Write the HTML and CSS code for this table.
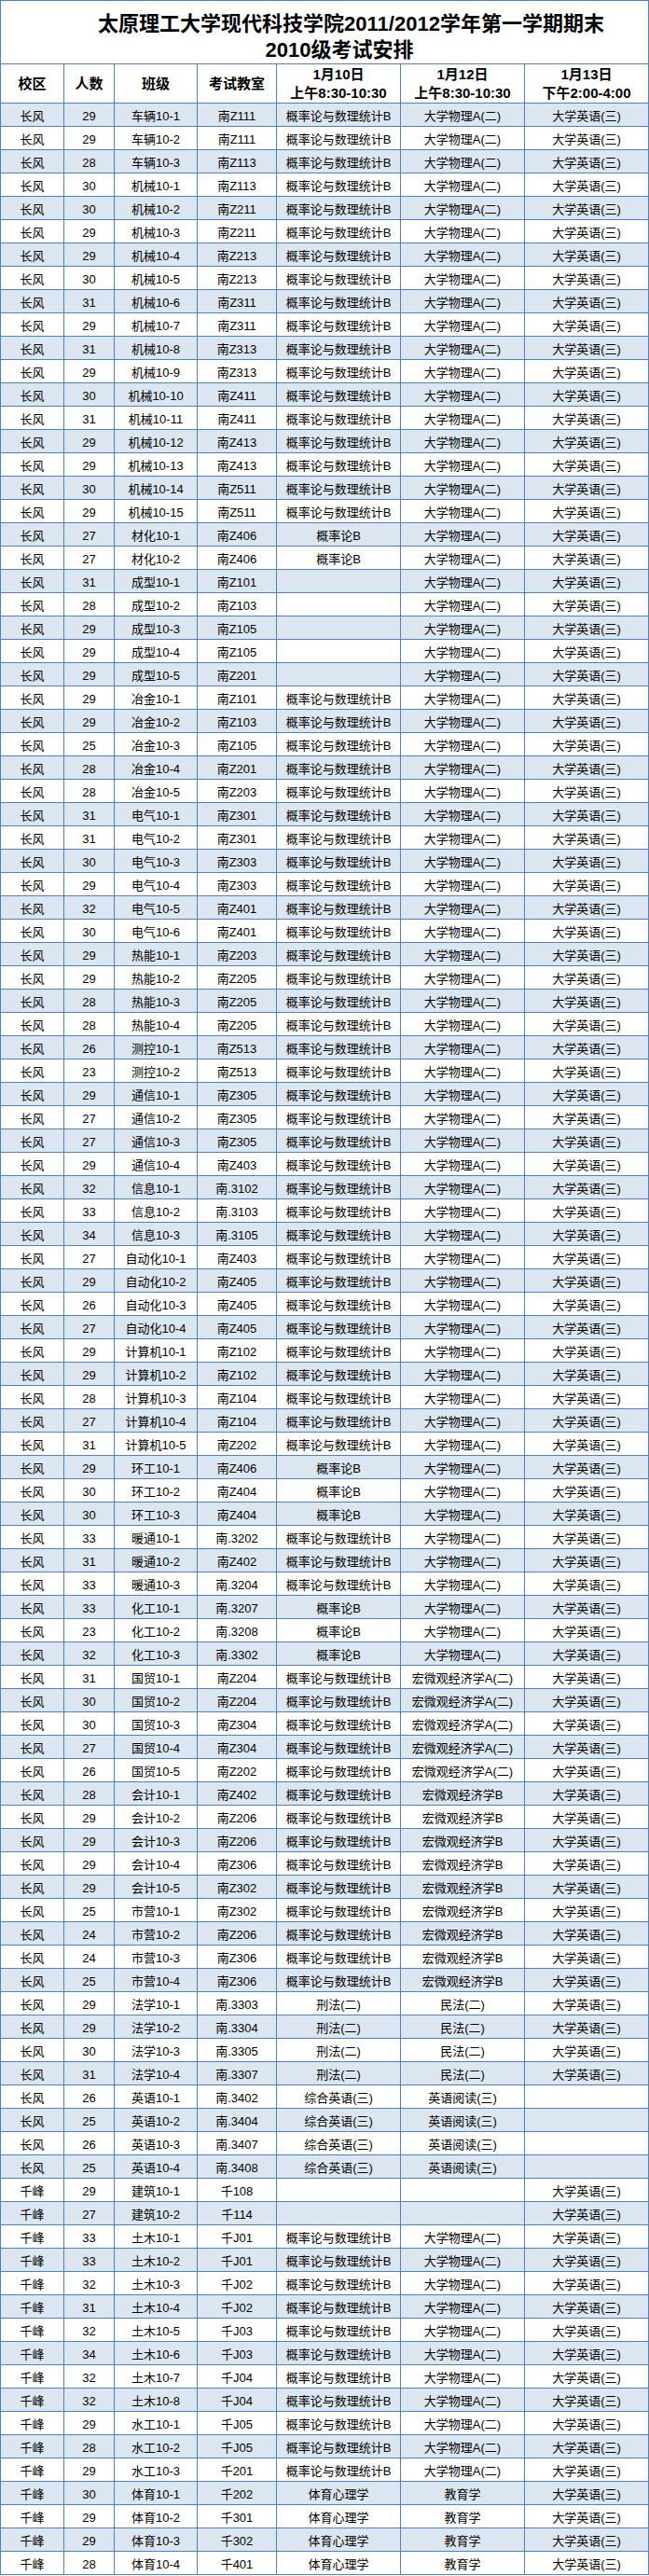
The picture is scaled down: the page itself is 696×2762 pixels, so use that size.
FILE: index.html
```html
<!DOCTYPE html>
<html lang="zh-CN">
<head>
<meta charset="utf-8">
<title>2010级考试安排</title>
<link rel="stylesheet" href="styles.css">
</head>
<body>
<div class="title">
  <div class="t1">太原理工大学现代科技学院2011/2012学年第一学期期末</div>
  <div class="t2">2010级考试安排</div>
</div>
<table class="sheet">
<thead>
<tr>
  <th class="c1">校区</th><th class="c2">人数</th><th class="c3">班级</th><th class="c4">考试教室</th>
  <th class="c5">1月10日<br>上午8:30-10:30</th><th class="c6">1月12日<br>上午8:30-10:30</th><th class="c7">1月13日<br>下午2:00-4:00</th>
</tr>
</thead>
<tbody>
<tr class="s"><td>长风</td><td>29</td><td>车辆10-1</td><td>南Z111</td><td>概率论与数理统计B</td><td>大学物理A(二)</td><td>大学英语(三)</td></tr>
<tr><td>长风</td><td>29</td><td>车辆10-2</td><td>南Z111</td><td>概率论与数理统计B</td><td>大学物理A(二)</td><td>大学英语(三)</td></tr>
<tr class="s"><td>长风</td><td>28</td><td>车辆10-3</td><td>南Z113</td><td>概率论与数理统计B</td><td>大学物理A(二)</td><td>大学英语(三)</td></tr>
<tr><td>长风</td><td>30</td><td>机械10-1</td><td>南Z113</td><td>概率论与数理统计B</td><td>大学物理A(二)</td><td>大学英语(三)</td></tr>
<tr class="s"><td>长风</td><td>30</td><td>机械10-2</td><td>南Z211</td><td>概率论与数理统计B</td><td>大学物理A(二)</td><td>大学英语(三)</td></tr>
<tr><td>长风</td><td>29</td><td>机械10-3</td><td>南Z211</td><td>概率论与数理统计B</td><td>大学物理A(二)</td><td>大学英语(三)</td></tr>
<tr class="s"><td>长风</td><td>29</td><td>机械10-4</td><td>南Z213</td><td>概率论与数理统计B</td><td>大学物理A(二)</td><td>大学英语(三)</td></tr>
<tr><td>长风</td><td>30</td><td>机械10-5</td><td>南Z213</td><td>概率论与数理统计B</td><td>大学物理A(二)</td><td>大学英语(三)</td></tr>
<tr class="s"><td>长风</td><td>31</td><td>机械10-6</td><td>南Z311</td><td>概率论与数理统计B</td><td>大学物理A(二)</td><td>大学英语(三)</td></tr>
<tr><td>长风</td><td>29</td><td>机械10-7</td><td>南Z311</td><td>概率论与数理统计B</td><td>大学物理A(二)</td><td>大学英语(三)</td></tr>
<tr class="s"><td>长风</td><td>31</td><td>机械10-8</td><td>南Z313</td><td>概率论与数理统计B</td><td>大学物理A(二)</td><td>大学英语(三)</td></tr>
<tr><td>长风</td><td>29</td><td>机械10-9</td><td>南Z313</td><td>概率论与数理统计B</td><td>大学物理A(二)</td><td>大学英语(三)</td></tr>
<tr class="s"><td>长风</td><td>30</td><td>机械10-10</td><td>南Z411</td><td>概率论与数理统计B</td><td>大学物理A(二)</td><td>大学英语(三)</td></tr>
<tr><td>长风</td><td>31</td><td>机械10-11</td><td>南Z411</td><td>概率论与数理统计B</td><td>大学物理A(二)</td><td>大学英语(三)</td></tr>
<tr class="s"><td>长风</td><td>29</td><td>机械10-12</td><td>南Z413</td><td>概率论与数理统计B</td><td>大学物理A(二)</td><td>大学英语(三)</td></tr>
<tr><td>长风</td><td>29</td><td>机械10-13</td><td>南Z413</td><td>概率论与数理统计B</td><td>大学物理A(二)</td><td>大学英语(三)</td></tr>
<tr class="s"><td>长风</td><td>30</td><td>机械10-14</td><td>南Z511</td><td>概率论与数理统计B</td><td>大学物理A(二)</td><td>大学英语(三)</td></tr>
<tr><td>长风</td><td>29</td><td>机械10-15</td><td>南Z511</td><td>概率论与数理统计B</td><td>大学物理A(二)</td><td>大学英语(三)</td></tr>
<tr class="s"><td>长风</td><td>27</td><td>材化10-1</td><td>南Z406</td><td>概率论B</td><td>大学物理A(二)</td><td>大学英语(三)</td></tr>
<tr><td>长风</td><td>27</td><td>材化10-2</td><td>南Z406</td><td>概率论B</td><td>大学物理A(二)</td><td>大学英语(三)</td></tr>
<tr class="s"><td>长风</td><td>31</td><td>成型10-1</td><td>南Z101</td><td></td><td>大学物理A(二)</td><td>大学英语(三)</td></tr>
<tr><td>长风</td><td>28</td><td>成型10-2</td><td>南Z103</td><td></td><td>大学物理A(二)</td><td>大学英语(三)</td></tr>
<tr class="s"><td>长风</td><td>29</td><td>成型10-3</td><td>南Z105</td><td></td><td>大学物理A(二)</td><td>大学英语(三)</td></tr>
<tr><td>长风</td><td>29</td><td>成型10-4</td><td>南Z105</td><td></td><td>大学物理A(二)</td><td>大学英语(三)</td></tr>
<tr class="s"><td>长风</td><td>29</td><td>成型10-5</td><td>南Z201</td><td></td><td>大学物理A(二)</td><td>大学英语(三)</td></tr>
<tr><td>长风</td><td>29</td><td>冶金10-1</td><td>南Z101</td><td>概率论与数理统计B</td><td>大学物理A(二)</td><td>大学英语(三)</td></tr>
<tr class="s"><td>长风</td><td>29</td><td>冶金10-2</td><td>南Z103</td><td>概率论与数理统计B</td><td>大学物理A(二)</td><td>大学英语(三)</td></tr>
<tr><td>长风</td><td>25</td><td>冶金10-3</td><td>南Z105</td><td>概率论与数理统计B</td><td>大学物理A(二)</td><td>大学英语(三)</td></tr>
<tr class="s"><td>长风</td><td>28</td><td>冶金10-4</td><td>南Z201</td><td>概率论与数理统计B</td><td>大学物理A(二)</td><td>大学英语(三)</td></tr>
<tr><td>长风</td><td>28</td><td>冶金10-5</td><td>南Z203</td><td>概率论与数理统计B</td><td>大学物理A(二)</td><td>大学英语(三)</td></tr>
<tr class="s"><td>长风</td><td>31</td><td>电气10-1</td><td>南Z301</td><td>概率论与数理统计B</td><td>大学物理A(二)</td><td>大学英语(三)</td></tr>
<tr><td>长风</td><td>31</td><td>电气10-2</td><td>南Z301</td><td>概率论与数理统计B</td><td>大学物理A(二)</td><td>大学英语(三)</td></tr>
<tr class="s"><td>长风</td><td>30</td><td>电气10-3</td><td>南Z303</td><td>概率论与数理统计B</td><td>大学物理A(二)</td><td>大学英语(三)</td></tr>
<tr><td>长风</td><td>29</td><td>电气10-4</td><td>南Z303</td><td>概率论与数理统计B</td><td>大学物理A(二)</td><td>大学英语(三)</td></tr>
<tr class="s"><td>长风</td><td>32</td><td>电气10-5</td><td>南Z401</td><td>概率论与数理统计B</td><td>大学物理A(二)</td><td>大学英语(三)</td></tr>
<tr><td>长风</td><td>30</td><td>电气10-6</td><td>南Z401</td><td>概率论与数理统计B</td><td>大学物理A(二)</td><td>大学英语(三)</td></tr>
<tr class="s"><td>长风</td><td>29</td><td>热能10-1</td><td>南Z203</td><td>概率论与数理统计B</td><td>大学物理A(二)</td><td>大学英语(三)</td></tr>
<tr><td>长风</td><td>29</td><td>热能10-2</td><td>南Z205</td><td>概率论与数理统计B</td><td>大学物理A(二)</td><td>大学英语(三)</td></tr>
<tr class="s"><td>长风</td><td>28</td><td>热能10-3</td><td>南Z205</td><td>概率论与数理统计B</td><td>大学物理A(二)</td><td>大学英语(三)</td></tr>
<tr><td>长风</td><td>28</td><td>热能10-4</td><td>南Z205</td><td>概率论与数理统计B</td><td>大学物理A(二)</td><td>大学英语(三)</td></tr>
<tr class="s"><td>长风</td><td>26</td><td>测控10-1</td><td>南Z513</td><td>概率论与数理统计B</td><td>大学物理A(二)</td><td>大学英语(三)</td></tr>
<tr><td>长风</td><td>23</td><td>测控10-2</td><td>南Z513</td><td>概率论与数理统计B</td><td>大学物理A(二)</td><td>大学英语(三)</td></tr>
<tr class="s"><td>长风</td><td>29</td><td>通信10-1</td><td>南Z305</td><td>概率论与数理统计B</td><td>大学物理A(二)</td><td>大学英语(三)</td></tr>
<tr><td>长风</td><td>27</td><td>通信10-2</td><td>南Z305</td><td>概率论与数理统计B</td><td>大学物理A(二)</td><td>大学英语(三)</td></tr>
<tr class="s"><td>长风</td><td>27</td><td>通信10-3</td><td>南Z305</td><td>概率论与数理统计B</td><td>大学物理A(二)</td><td>大学英语(三)</td></tr>
<tr><td>长风</td><td>29</td><td>通信10-4</td><td>南Z403</td><td>概率论与数理统计B</td><td>大学物理A(二)</td><td>大学英语(三)</td></tr>
<tr class="s"><td>长风</td><td>32</td><td>信息10-1</td><td>南.3102</td><td>概率论与数理统计B</td><td>大学物理A(二)</td><td>大学英语(三)</td></tr>
<tr><td>长风</td><td>33</td><td>信息10-2</td><td>南.3103</td><td>概率论与数理统计B</td><td>大学物理A(二)</td><td>大学英语(三)</td></tr>
<tr class="s"><td>长风</td><td>34</td><td>信息10-3</td><td>南.3105</td><td>概率论与数理统计B</td><td>大学物理A(二)</td><td>大学英语(三)</td></tr>
<tr><td>长风</td><td>27</td><td>自动化10-1</td><td>南Z403</td><td>概率论与数理统计B</td><td>大学物理A(二)</td><td>大学英语(三)</td></tr>
<tr class="s"><td>长风</td><td>29</td><td>自动化10-2</td><td>南Z405</td><td>概率论与数理统计B</td><td>大学物理A(二)</td><td>大学英语(三)</td></tr>
<tr><td>长风</td><td>26</td><td>自动化10-3</td><td>南Z405</td><td>概率论与数理统计B</td><td>大学物理A(二)</td><td>大学英语(三)</td></tr>
<tr class="s"><td>长风</td><td>27</td><td>自动化10-4</td><td>南Z405</td><td>概率论与数理统计B</td><td>大学物理A(二)</td><td>大学英语(三)</td></tr>
<tr><td>长风</td><td>29</td><td>计算机10-1</td><td>南Z102</td><td>概率论与数理统计B</td><td>大学物理A(二)</td><td>大学英语(三)</td></tr>
<tr class="s"><td>长风</td><td>29</td><td>计算机10-2</td><td>南Z102</td><td>概率论与数理统计B</td><td>大学物理A(二)</td><td>大学英语(三)</td></tr>
<tr><td>长风</td><td>28</td><td>计算机10-3</td><td>南Z104</td><td>概率论与数理统计B</td><td>大学物理A(二)</td><td>大学英语(三)</td></tr>
<tr class="s"><td>长风</td><td>27</td><td>计算机10-4</td><td>南Z104</td><td>概率论与数理统计B</td><td>大学物理A(二)</td><td>大学英语(三)</td></tr>
<tr><td>长风</td><td>31</td><td>计算机10-5</td><td>南Z202</td><td>概率论与数理统计B</td><td>大学物理A(二)</td><td>大学英语(三)</td></tr>
<tr class="s"><td>长风</td><td>29</td><td>环工10-1</td><td>南Z406</td><td>概率论B</td><td>大学物理A(二)</td><td>大学英语(三)</td></tr>
<tr><td>长风</td><td>30</td><td>环工10-2</td><td>南Z404</td><td>概率论B</td><td>大学物理A(二)</td><td>大学英语(三)</td></tr>
<tr class="s"><td>长风</td><td>30</td><td>环工10-3</td><td>南Z404</td><td>概率论B</td><td>大学物理A(二)</td><td>大学英语(三)</td></tr>
<tr><td>长风</td><td>33</td><td>暖通10-1</td><td>南.3202</td><td>概率论与数理统计B</td><td>大学物理A(二)</td><td>大学英语(三)</td></tr>
<tr class="s"><td>长风</td><td>31</td><td>暖通10-2</td><td>南Z402</td><td>概率论与数理统计B</td><td>大学物理A(二)</td><td>大学英语(三)</td></tr>
<tr><td>长风</td><td>33</td><td>暖通10-3</td><td>南.3204</td><td>概率论与数理统计B</td><td>大学物理A(二)</td><td>大学英语(三)</td></tr>
<tr class="s"><td>长风</td><td>33</td><td>化工10-1</td><td>南.3207</td><td>概率论B</td><td>大学物理A(二)</td><td>大学英语(三)</td></tr>
<tr><td>长风</td><td>23</td><td>化工10-2</td><td>南.3208</td><td>概率论B</td><td>大学物理A(二)</td><td>大学英语(三)</td></tr>
<tr class="s"><td>长风</td><td>32</td><td>化工10-3</td><td>南.3302</td><td>概率论B</td><td>大学物理A(二)</td><td>大学英语(三)</td></tr>
<tr><td>长风</td><td>31</td><td>国贸10-1</td><td>南Z204</td><td>概率论与数理统计B</td><td>宏微观经济学A(二)</td><td>大学英语(三)</td></tr>
<tr class="s"><td>长风</td><td>30</td><td>国贸10-2</td><td>南Z204</td><td>概率论与数理统计B</td><td>宏微观经济学A(二)</td><td>大学英语(三)</td></tr>
<tr><td>长风</td><td>30</td><td>国贸10-3</td><td>南Z304</td><td>概率论与数理统计B</td><td>宏微观经济学A(二)</td><td>大学英语(三)</td></tr>
<tr class="s"><td>长风</td><td>27</td><td>国贸10-4</td><td>南Z304</td><td>概率论与数理统计B</td><td>宏微观经济学A(二)</td><td>大学英语(三)</td></tr>
<tr><td>长风</td><td>26</td><td>国贸10-5</td><td>南Z202</td><td>概率论与数理统计B</td><td>宏微观经济学A(二)</td><td>大学英语(三)</td></tr>
<tr class="s"><td>长风</td><td>28</td><td>会计10-1</td><td>南Z402</td><td>概率论与数理统计B</td><td>宏微观经济学B</td><td>大学英语(三)</td></tr>
<tr><td>长风</td><td>29</td><td>会计10-2</td><td>南Z206</td><td>概率论与数理统计B</td><td>宏微观经济学B</td><td>大学英语(三)</td></tr>
<tr class="s"><td>长风</td><td>29</td><td>会计10-3</td><td>南Z206</td><td>概率论与数理统计B</td><td>宏微观经济学B</td><td>大学英语(三)</td></tr>
<tr><td>长风</td><td>29</td><td>会计10-4</td><td>南Z306</td><td>概率论与数理统计B</td><td>宏微观经济学B</td><td>大学英语(三)</td></tr>
<tr class="s"><td>长风</td><td>29</td><td>会计10-5</td><td>南Z302</td><td>概率论与数理统计B</td><td>宏微观经济学B</td><td>大学英语(三)</td></tr>
<tr><td>长风</td><td>25</td><td>市营10-1</td><td>南Z302</td><td>概率论与数理统计B</td><td>宏微观经济学B</td><td>大学英语(三)</td></tr>
<tr class="s"><td>长风</td><td>24</td><td>市营10-2</td><td>南Z206</td><td>概率论与数理统计B</td><td>宏微观经济学B</td><td>大学英语(三)</td></tr>
<tr><td>长风</td><td>24</td><td>市营10-3</td><td>南Z306</td><td>概率论与数理统计B</td><td>宏微观经济学B</td><td>大学英语(三)</td></tr>
<tr class="s"><td>长风</td><td>25</td><td>市营10-4</td><td>南Z306</td><td>概率论与数理统计B</td><td>宏微观经济学B</td><td>大学英语(三)</td></tr>
<tr><td>长风</td><td>29</td><td>法学10-1</td><td>南.3303</td><td>刑法(二)</td><td>民法(二)</td><td>大学英语(三)</td></tr>
<tr class="s"><td>长风</td><td>29</td><td>法学10-2</td><td>南.3304</td><td>刑法(二)</td><td>民法(二)</td><td>大学英语(三)</td></tr>
<tr><td>长风</td><td>30</td><td>法学10-3</td><td>南.3305</td><td>刑法(二)</td><td>民法(二)</td><td>大学英语(三)</td></tr>
<tr class="s"><td>长风</td><td>31</td><td>法学10-4</td><td>南.3307</td><td>刑法(二)</td><td>民法(二)</td><td>大学英语(三)</td></tr>
<tr><td>长风</td><td>26</td><td>英语10-1</td><td>南.3402</td><td>综合英语(三)</td><td>英语阅读(三)</td><td></td></tr>
<tr class="s"><td>长风</td><td>25</td><td>英语10-2</td><td>南.3404</td><td>综合英语(三)</td><td>英语阅读(三)</td><td></td></tr>
<tr><td>长风</td><td>26</td><td>英语10-3</td><td>南.3407</td><td>综合英语(三)</td><td>英语阅读(三)</td><td></td></tr>
<tr class="s"><td>长风</td><td>25</td><td>英语10-4</td><td>南.3408</td><td>综合英语(三)</td><td>英语阅读(三)</td><td></td></tr>
<tr><td>千峰</td><td>29</td><td>建筑10-1</td><td>千108</td><td></td><td></td><td>大学英语(三)</td></tr>
<tr class="s"><td>千峰</td><td>27</td><td>建筑10-2</td><td>千114</td><td></td><td></td><td>大学英语(三)</td></tr>
<tr><td>千峰</td><td>33</td><td>土木10-1</td><td>千J01</td><td>概率论与数理统计B</td><td>大学物理A(二)</td><td>大学英语(三)</td></tr>
<tr class="s"><td>千峰</td><td>33</td><td>土木10-2</td><td>千J01</td><td>概率论与数理统计B</td><td>大学物理A(二)</td><td>大学英语(三)</td></tr>
<tr><td>千峰</td><td>32</td><td>土木10-3</td><td>千J02</td><td>概率论与数理统计B</td><td>大学物理A(二)</td><td>大学英语(三)</td></tr>
<tr class="s"><td>千峰</td><td>31</td><td>土木10-4</td><td>千J02</td><td>概率论与数理统计B</td><td>大学物理A(二)</td><td>大学英语(三)</td></tr>
<tr><td>千峰</td><td>32</td><td>土木10-5</td><td>千J03</td><td>概率论与数理统计B</td><td>大学物理A(二)</td><td>大学英语(三)</td></tr>
<tr class="s"><td>千峰</td><td>34</td><td>土木10-6</td><td>千J03</td><td>概率论与数理统计B</td><td>大学物理A(二)</td><td>大学英语(三)</td></tr>
<tr><td>千峰</td><td>32</td><td>土木10-7</td><td>千J04</td><td>概率论与数理统计B</td><td>大学物理A(二)</td><td>大学英语(三)</td></tr>
<tr class="s"><td>千峰</td><td>32</td><td>土木10-8</td><td>千J04</td><td>概率论与数理统计B</td><td>大学物理A(二)</td><td>大学英语(三)</td></tr>
<tr><td>千峰</td><td>29</td><td>水工10-1</td><td>千J05</td><td>概率论与数理统计B</td><td>大学物理A(二)</td><td>大学英语(三)</td></tr>
<tr class="s"><td>千峰</td><td>28</td><td>水工10-2</td><td>千J05</td><td>概率论与数理统计B</td><td>大学物理A(二)</td><td>大学英语(三)</td></tr>
<tr><td>千峰</td><td>29</td><td>水工10-3</td><td>千201</td><td>概率论与数理统计B</td><td>大学物理A(二)</td><td>大学英语(三)</td></tr>
<tr class="s"><td>千峰</td><td>30</td><td>体育10-1</td><td>千202</td><td>体育心理学</td><td>教育学</td><td>大学英语(三)</td></tr>
<tr><td>千峰</td><td>29</td><td>体育10-2</td><td>千301</td><td>体育心理学</td><td>教育学</td><td>大学英语(三)</td></tr>
<tr class="s"><td>千峰</td><td>29</td><td>体育10-3</td><td>千302</td><td>体育心理学</td><td>教育学</td><td>大学英语(三)</td></tr>
<tr><td>千峰</td><td>28</td><td>体育10-4</td><td>千401</td><td>体育心理学</td><td>教育学</td><td>大学英语(三)</td></tr>
</tbody>
</table>
</body>
</html>
```

FILE: styles.css
```css
html, body {
  margin: 0;
  padding: 0;
  background: #ffffff;
}

body {
  width: 696px;
  font-family: "Liberation Sans", "Noto Sans CJK SC", sans-serif;
  color: #000000;
}

.title {
  box-sizing: border-box;
  width: 696px;
  height: 68px;
  border-top: 1px solid #4f81bd;
  border-left: 1px solid #4f81bd;
  border-right: 1px solid #4f81bd;
  padding-top: 11px;
  font-weight: 700;
  font-size: 22px;
  line-height: 28px;
  white-space: nowrap;
  text-align: center;
}

.t1 {
  padding-left: 57px;
}

.t2 {
  padding-left: 32px;
}

.sheet {
  width: 696px;
  table-layout: fixed;
  border-collapse: separate;
  border-spacing: 0;
  border-top: 1px solid #4f81bd;
  border-left: 1px solid #4f81bd;
}

.sheet th,
.sheet td {
  box-sizing: border-box;
  padding: 0;
  border-right: 1px solid #4f81bd;
  border-bottom: 1px solid #4f81bd;
  text-align: center;
  white-space: nowrap;
  overflow: hidden;
}

.sheet th {
  height: 42px;
  font-size: 15px;
  font-weight: 700;
  line-height: 19.5px;
  vertical-align: middle;
  background: #ffffff;
}

.c1 { width: 68px; }
.c2 { width: 54px; }
.c3 { width: 89px; }
.c4 { width: 85px; }
.c5 { width: 133px; }
.c6 { width: 133px; }
.c7 { width: 133px; }

.sheet td {
  height: 25px;
  padding-top: 3px;
  font-size: 13px;
  line-height: 21px;
  vertical-align: top;
  background: #ffffff;
}

.sheet tr.s td {
  background: #dce6f1;
}
```
